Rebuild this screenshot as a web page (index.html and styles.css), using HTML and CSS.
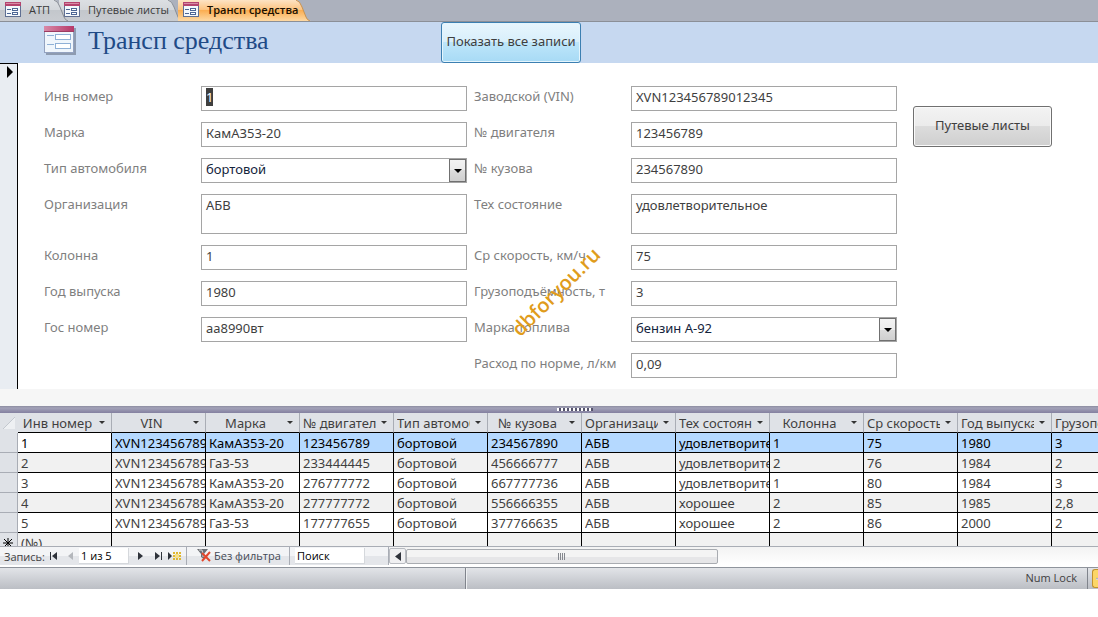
FILE: index.html
```
<!DOCTYPE html>
<html lang="ru">
<head>
    <meta charset="UTF-8">
    <meta name="viewport" content="width=device-width, initial-scale=1.0">
    <title>Трансп средства</title>
    <link rel="stylesheet" href="styles.css">
</head>
<body>
    <!-- shared icons -->
    <svg class="sprite" width="0" height="0">
        <defs>
            <linearGradient id="pink" x1="0" x2="1" y1="0" y2="0">
                <stop offset="0" stop-color="#d98aa8"/>
                <stop offset="1" stop-color="#b5386a"/>
            </linearGradient>
            <linearGradient id="grey-tab" x1="0" x2="0" y1="0" y2="1">
                <stop offset="0" stop-color="#dcdfe3"/>
                <stop offset="0.5" stop-color="#d3d6da"/>
                <stop offset="0.5" stop-color="#c3c7cc"/>
                <stop offset="1" stop-color="#c9ccd1"/>
            </linearGradient>
            <linearGradient id="orange-tab" x1="0" x2="0" y1="0" y2="1">
                <stop offset="0" stop-color="#fde3c4"/>
                <stop offset="0.45" stop-color="#fdc583"/>
                <stop offset="0.5" stop-color="#fbae52"/>
                <stop offset="1" stop-color="#fdd9a4"/>
            </linearGradient>
            <symbol id="form-icon" viewBox="0 0 16 16">
                <rect x="0.5" y="0.5" width="15" height="14" fill="#f4f8fc" stroke="#5f6f92"/>
                <rect x="0" y="0" width="16" height="4" fill="#b5446f"/>
                <rect x="1" y="1" width="14" height="1" fill="#d78aa6"/>
                <path d="M2 7.500h4M2 11.500h4" stroke="#4c6695"/>
                <rect x="7.5" y="6.5" width="5" height="2" fill="#fff" stroke="#4c6695"/>
                <rect x="7.5" y="10.5" width="5" height="2" fill="#fff" stroke="#4c6695"/>
            </symbol>
        </defs>
    </svg>

    <nav class="tabs">
        <a class="tab first" href="#atp">
            <svg class="tab-icon"><use href="#form-icon"/></svg>
            <span>АТП</span>
            <svg class="tab-cap" viewBox="0 0 16 21"><path d="M0 0h3q3 1 5 7l4 10q1 3 4 4H0z" fill="url(#grey-tab)"/><path d="M2 0q4 1 6 7l4 10q1 3 4 4" fill="none" stroke="#8a8e95"/></svg>
        </a>
        <a class="tab second" href="#lists">
            <svg class="tab-icon"><use href="#form-icon"/></svg>
            <span>Путевые листы</span>
            <svg class="tab-cap" viewBox="0 0 16 21"><path d="M0 0h3q3 1 5 7l4 10q1 3 4 4H0z" fill="url(#grey-tab)"/><path d="M2 0q4 1 6 7l4 10q1 3 4 4" fill="none" stroke="#8a8e95"/></svg>
        </a>
        <a class="tab active" href="#vehicles">
            <svg class="tab-icon"><use href="#form-icon"/></svg>
            <span>Трансп средства</span>
            <svg class="tab-cap" viewBox="0 0 16 21"><path d="M0 0h1q4 1 6 7l4 10q1 3 5 4H0z" fill="url(#orange-tab)"/><path d="M1 0q4 1 6 7l4 10q1 3 4 4" fill="none" stroke="#c9924f"/></svg>
        </a>
    </nav>

    <header class="form-header">
        <svg class="title-icon" viewBox="0 0 32 29">
            <rect x="2" y="2" width="30" height="27" fill="#8e9bb0"/>
            <rect x="0.5" y="0.5" width="29" height="26" fill="#f0f6fc" stroke="#93a2c0"/>
            <rect x="0" y="0" width="30" height="5" fill="url(#pink)"/>
            <rect x="0" y="5" width="30" height="1" fill="#9c3c62"/>
            <path d="M3 9.500h7M3 18.500h7" stroke="#8fb0d6"/>
            <rect x="11.5" y="8.5" width="15" height="5" fill="#fff" stroke="#8fb0d6"/>
            <rect x="11.5" y="17.5" width="15" height="5" fill="#fff" stroke="#8fb0d6"/>
        </svg>
        <h1>Трансп средства</h1>
        <button type="button" class="btn btn-blue">Показать все записи</button>
    </header>

    <main class="record">
        <div class="record-selector">
            <svg width="7" height="12" viewBox="0 0 7 12"><path d="M0 0v12l6-6z"/></svg>
        </div>
        <form class="vehicle-form">
            <div class="fields">
                <label for="inv">Инв номер</label>
                <input type="text" id="inv" value="1">
                <label for="vin">Заводской (VIN)</label>
                <input type="text" id="vin" value="XVN123456789012345">

                <label for="brand">Марка</label>
                <input type="text" id="brand" value="КамАЗ53-20">
                <label for="engine">№ двигателя</label>
                <input type="text" id="engine" value="123456789">

                <label for="type">Тип автомобиля</label>
                <div class="combo">
                    <select id="type"><option>бортовой</option></select>
                    <span class="combo-arrow"></span>
                </div>
                <label for="body-no">№ кузова</label>
                <input type="text" id="body-no" value="234567890">

                <label for="org">Организация</label>
                <textarea id="org">АБВ</textarea>
                <label for="state">Тех состояние</label>
                <textarea id="state">удовлетворительное</textarea>

                <label for="column">Колонна</label>
                <input type="text" id="column" value="1">
                <label for="speed">Ср скорость, км/ч</label>
                <input type="text" id="speed" value="75">

                <label for="year">Год выпуска</label>
                <input type="text" id="year" value="1980">
                <label for="capacity">Грузоподъёмность, т</label>
                <input type="text" id="capacity" value="3">

                <label for="plate">Гос номер</label>
                <input type="text" id="plate" value="аа8990вт">
                <label for="fuel">Марка топлива</label>
                <div class="combo">
                    <select id="fuel"><option>бензин А-92</option></select>
                    <span class="combo-arrow"></span>
                </div>

                <label for="rate" class="right-col">Расход по норме, л/км</label>
                <input type="text" id="rate" value="0,09">
            </div>
            <button type="button" class="btn btn-grey">Путевые листы</button>
            <span class="watermark">dbforyou.ru</span>
        </form>
    </main>

    <div class="splitter"><span class="grip"></span></div>

    <div class="sheet">
        <table>
            <colgroup>
                <col class="col-sel">
                <col span="12">
            </colgroup>
            <thead>
                <tr>
                    <th class="corner"><svg width="12" height="12" viewBox="0 0 12 12"><path d="M12 0v12H0z" fill="#eef0f3"/><path d="M0 12L12 0" stroke="#c3c8cf"/></svg></th>
                    <th><div class="head"><span>Инв номер</span><i></i></div></th>
                    <th><div class="head"><span>VIN</span><i></i></div></th>
                    <th><div class="head"><span>Марка</span><i></i></div></th>
                    <th><div class="head"><span>№ двигателя</span><i></i></div></th>
                    <th><div class="head"><span>Тип автомобиля</span><i></i></div></th>
                    <th><div class="head"><span>№ кузова</span><i></i></div></th>
                    <th><div class="head"><span>Организация</span><i></i></div></th>
                    <th><div class="head"><span>Тех состояние</span><i></i></div></th>
                    <th><div class="head"><span>Колонна</span><i></i></div></th>
                    <th><div class="head"><span>Ср скорость</span><i></i></div></th>
                    <th><div class="head"><span>Год выпуска</span><i></i></div></th>
                    <th><div class="head"><span>Грузоподъёмность</span><i></i></div></th>
                </tr>
            </thead>
            <tbody>
                <tr class="current"><td class="sel"></td><td>1</td><td>XVN123456789012345</td><td>КамАЗ53-20</td><td>123456789</td><td>бортовой</td><td>234567890</td><td>АБВ</td><td>удовлетворительное</td><td>1</td><td>75</td><td>1980</td><td>3</td></tr>
                <tr><td class="sel"></td><td>2</td><td>XVN123456789012345</td><td>ГаЗ-53</td><td>233444445</td><td>бортовой</td><td>456666777</td><td>АБВ</td><td>удовлетворительное</td><td>2</td><td>76</td><td>1984</td><td>2</td></tr>
                <tr><td class="sel"></td><td>3</td><td>XVN123456789012345</td><td>КамАЗ53-20</td><td>276777772</td><td>бортовой</td><td>667777736</td><td>АБВ</td><td>удовлетворительное</td><td>1</td><td>80</td><td>1984</td><td>3</td></tr>
                <tr><td class="sel"></td><td>4</td><td>XVN123456789012345</td><td>КамАЗ53-20</td><td>277777772</td><td>бортовой</td><td>556666355</td><td>АБВ</td><td>хорошее</td><td>2</td><td>85</td><td>1985</td><td>2,8</td></tr>
                <tr><td class="sel"></td><td>5</td><td>XVN123456789012345</td><td>ГаЗ-53</td><td>177777655</td><td>бортовой</td><td>377766635</td><td>АБВ</td><td>хорошее</td><td>2</td><td>86</td><td>2000</td><td>2</td></tr>
                <tr><td class="sel"><svg width="10" height="10" viewBox="0 0 10 10"><path d="M5 0v10M0 5h10M1 1l8 8M9 1l-8 8" stroke="#000"/></svg></td><td>(№)</td><td></td><td></td><td></td><td></td><td></td><td></td><td></td><td></td><td></td><td></td><td></td></tr>
            </tbody>
        </table>
    </div>

    <div class="navigator">
        <div class="nav-group records">
            <label for="rec-no">Запись:</label>
            <button type="button" aria-label="Первая запись"><svg width="8" height="8" viewBox="0 0 8 8"><path d="M0 0h1v8H0zM7 0v8L2 4z"/></svg></button>
            <button type="button" aria-label="Предыдущая запись" disabled><svg width="5" height="8" viewBox="0 0 5 8"><path d="M5 0v8L0 4z"/></svg></button>
            <input type="text" id="rec-no" value="1 из 5">
            <button type="button" aria-label="Следующая запись"><svg width="5" height="8" viewBox="0 0 5 8"><path d="M0 0v8l5-4z"/></svg></button>
            <button type="button" aria-label="Последняя запись"><svg width="8" height="8" viewBox="0 0 8 8"><path d="M7 0h1v8H7zM1 0v8l5-4z"/></svg></button>
            <button type="button" aria-label="Новая запись"><svg width="13" height="8" viewBox="0 0 13 8"><path d="M0 0v8l4-4z"/><path d="M5 0h2v2H5zM8 0h2v2H8zM11 0h2v2h-2zM5 3h2v2H5zM11 3h2v2h-2zM5 6h2v2H5zM8 6h2v2H8zM11 6h2v2h-2z" fill="#e0b832"/><rect x="7" y="2" width="4" height="4" fill="#f6e08a"/></svg></button>
        </div>
        <button type="button" class="nav-group filter">
            <svg width="15" height="13" viewBox="0 0 15 13"><path d="M0 0h11L7 5v5l-3-2V5z" fill="#6d7075"/><path d="M2 1h3l1 4v3" fill="none" stroke="#d5d8dc"/><path d="M5 4l8 8M13 3l-8 9" stroke="#e2472c" stroke-width="2"/></svg>
            <span>Без фильтра</span>
        </button>
        <div class="nav-group search">
            <input type="text" aria-label="Поиск" value="Поиск">
        </div>
        <div class="scrollbar">
            <button type="button" aria-label="Влево"><svg width="6" height="9" viewBox="0 0 6 9"><path d="M6 0v9L0 4.500z"/></svg></button>
            <div class="thumb"><span></span></div>
        </div>
    </div>

    <footer class="status">
        <div class="status-left"></div>
        <div class="status-right"><span>Num Lock</span></div>
        <button type="button" class="view-btn" aria-label="Режим формы"><svg width="12" height="12" viewBox="0 0 12 12"><rect x="0.5" y="0.5" width="11" height="10" fill="#fff" stroke="#54688d"/><path d="M1 2h10" stroke="#54688d" stroke-width="2"/></svg></button>
    </footer>

    <script>
        // the cursor starts in the first field with its value selected
        const inv = document.getElementById('inv');
        inv.focus();
        inv.select();
    </script>
</body>
</html>
```
FILE: styles.css
```
* {
    margin: 0;
    padding: 0;
    box-sizing: border-box;
}

body {
    font-family: "Noto Sans", "Open Sans", sans-serif;
    font-size: 13px;
    color: #3f3f3f;
    background: #fff;
    overflow: hidden;
}

input, select, textarea, button {
    font: inherit;
    color: inherit;
}

.sprite {
    position: absolute;
}

/* tabs */
.tabs {
    display: flex;
    height: 22px;
    background: #acb1bd;
    border-bottom: 1px solid #8b8f97;
    font-family: "Open Sans", sans-serif;
    font-size: 11px;
}

.tab {
    position: relative;
    display: flex;
    align-items: center;
    gap: 8px;
    height: 21px;
    padding-left: 5px;
    padding-bottom: 2px;
    color: #3a3a3a;
    text-decoration: none;
    background: linear-gradient(#dcdfe3, #d3d6da 50%, #c3c7cc 50%, #c9ccd1);
}

.tab.first {
    width: 52px;
    z-index: 2;
}

.tab.second {
    width: 107px;
    margin-left: 7px;
    margin-right: 12px;
    z-index: 1;
}

.tab.active {
    z-index: 3;
    width: 117px;
    color: #1a1000;
    font-weight: 600;
    background: linear-gradient(#fde3c4, #fdc583 45%, #fbae52 50%, #fdd9a4);
}

.tab span {
    position: relative;
    z-index: 1;
    white-space: nowrap;
}

.tab-icon {
    flex: none;
    width: 16px;
    height: 16px;
}

.tab-cap {
    position: absolute;
    left: 100%;
    top: 0;
    width: 16px;
    height: 21px;
}

/* header */
.form-header {
    display: flex;
    align-items: flex-start;
    height: 41px;
    padding-left: 44px;
    background: #c6d8f0;
}

.title-icon {
    flex: none;
    width: 32px;
    height: 29px;
    margin-top: 4px;
}

.form-header h1 {
    width: 365px;
    padding-left: 12px;
    font-family: "Liberation Serif", serif;
    font-size: 26px;
    font-weight: normal;
    line-height: 38px;
    color: #1f4a86;
}

.btn {
    height: 41px;
    padding-bottom: 3px;
    border-radius: 3px;
    font-size: 13px;
    white-space: nowrap;
}

.btn-blue {
    width: 140px;
    border: 1px solid #3c7fb1;
    background: linear-gradient(#e8f6fd, #d8effb 48%, #bee6fa 50%, #a7daf5);
    box-shadow: inset 0 0 0 1px #e4f5fd;
}

.btn-grey {
    width: 139px;
    margin-top: 20px;
    border: 1px solid #707070;
    background: linear-gradient(#f3f3f3, #ebebeb 48%, #dcdcdc 50%, #cfcfcf);
    box-shadow: inset 0 0 0 1px #fafafa;
}

/* record form */
.record {
    display: flex;
    height: 326px;
}

.record-selector {
    width: 18px;
    padding: 2px 0 0 7px;
    line-height: 0;
    background: #e9edf2;
    border-top: 1px solid #000;
    border-right: 1px solid #000;
}

.vehicle-form {
    position: relative;
    display: flex;
    align-items: flex-start;
    gap: 16px;
    padding: 23px 0 0 26px;
}

.fields {
    display: grid;
    grid-template-columns: 150px 266px 150px 266px;
    column-gap: 7px;
    row-gap: 11px;
}

.fields label {
    line-height: 20px;
    color: #7f7f7f;
    white-space: nowrap;
}

.fields .right-col {
    grid-column: 3;
}

.fields input,
.fields select,
.fields textarea {
    display: block;
    width: 100%;
    height: 25px;
    padding: 0 4px 3px;
    border: 1px solid #a5a5a5;
    border-radius: 0;
    background: #fff;
    outline: none;
}

.fields textarea {
    height: 40px;
    line-height: 20px;
    resize: none;
    overflow: hidden;
}

.fields select {
    appearance: none;
    color: #14243c;
}

.fields input::selection {
    color: #fff;
    background: #3f3f3f;
}

.combo {
    position: relative;
}

.combo-arrow {
    position: absolute;
    top: 1px;
    right: 1px;
    display: flex;
    align-items: center;
    justify-content: center;
    width: 17px;
    height: 23px;
    border: 1px solid #707070;
    background: linear-gradient(#f3f3f3, #ebebeb 50%, #dcdcdc 50%, #cfcfcf);
    pointer-events: none;
}

.combo-arrow::after {
    content: "";
    border: 4px solid transparent;
    border-top-color: #000;
    border-bottom: none;
}

.watermark {
    position: absolute;
    top: 215px;
    left: 480px;
    font-family: "Open Sans", sans-serif;
    font-size: 20px;
    font-weight: 600;
    color: #e09c1c;
    transform: rotate(-45deg);
    pointer-events: none;
}

/* splitter between the form and the datasheet */
.splitter {
    display: flex;
    justify-content: center;
    height: 24px;
    padding-top: 19px;
    padding-left: 52px;
    background: linear-gradient(#f6f6f6 17px, #8c8ca0 17px, #a3a2b8 19px, #8380a0);
}

.grip {
    width: 36px;
    height: 3px;
    background: repeating-linear-gradient(90deg, #fff 0 2px, #55536c 2px 4px);
}

/* datasheet */
.sheet {
    height: 133px;
    overflow: hidden;
}

.sheet table {
    width: 1146px;
    table-layout: fixed;
    border-collapse: separate;
    border-spacing: 0;
}

.col-sel {
    width: 18px;
}

.sheet th,
.sheet td {
    height: 20px;
    padding: 1px 0 0 3px;
    border-right: 1px solid #000;
    border-bottom: 1px solid #000;
    line-height: 18px;
    text-align: left;
    white-space: nowrap;
    overflow: clip;
    overflow-clip-margin: content-box;
}

.sheet th {
    padding-top: 0;
    font-weight: normal;
    background: #dfe2e7;
    border-right-color: #a9adb5;
}

.sheet th.corner {
    border-color: #dfe2e7;
    line-height: 0;
}

.head {
    display: flex;
    align-items: center;
}

.head span {
    flex: 1;
    overflow: hidden;
    text-align: center;
}

.head i {
    margin: 0 6px 0 5px;
    border: 3px solid transparent;
    border-top-color: #333;
    border-bottom: none;
}

.sheet tr:nth-child(even) td {
    background: #f1f1f1;
}

.sheet tr.current td {
    color: #000;
    background: #b5d9ff;
}

.sheet tr.current td:nth-child(2) {
    background: #fff;
}

.sheet tbody td.sel,
.sheet tbody tr.current td.sel,
.sheet tbody tr:nth-child(even) td.sel {
    background: #dfe2e7;
    border-color: #a9adb5;
}

/* record navigator */
.navigator {
    display: flex;
    height: 21px;
    border-top: 1px solid #a9adb5;
    background: linear-gradient(#f3f3f3, #fff 18px);
    font-family: "Open Sans", sans-serif;
    font-size: 11px;
}

.nav-group {
    display: flex;
    align-items: center;
    height: 18px;
    border: none;
    border-right: 1px solid #a9adb5;
    background: linear-gradient(#f3f4f6 50%, #e4e6ea 50%);
}

.navigator button {
    color: #444a55;
}

.navigator svg {
    display: block;
    fill: #2f333b;
}

.records {
    width: 187px;
    padding-left: 4px;
}

.records label {
    width: 41px;
}

.records button {
    display: flex;
    justify-content: center;
    width: 17px;
    border: none;
    background: none;
}

.records button:disabled svg {
    fill: #b4b7bc;
}

.navigator input {
    height: 16px;
    padding-left: 2px;
    padding-bottom: 1px;
    border: 1px solid #d5d8dc;
    border-top: none;
    border-left: none;
    background: #fff;
    color: #000;
}

.records input {
    width: 50px;
    margin-right: 3px;
}

.navigator .filter {
    width: 103px;
    padding-left: 10px;
    padding-bottom: 1px;
    gap: 2px;
    white-space: nowrap;
}

.search {
    width: 99px;
    padding-left: 5px;
}

.search input {
    width: 70px;
}

.scrollbar {
    flex: 1;
    display: flex;
    align-items: center;
    height: 18px;
}

.scrollbar button {
    display: flex;
    align-items: center;
    justify-content: center;
    width: 17px;
    height: 16px;
    border: 1px solid #b9bcc2;
    border-radius: 2px;
    background: #f0f0f2;
}

.thumb {
    display: flex;
    align-items: center;
    justify-content: center;
    width: 44%;
    height: 15px;
    border: 1px solid #a9acb1;
    border-radius: 2px;
    background: linear-gradient(#f4f4f4 50%, #e6e6e8 50%);
}

.thumb span {
    width: 8px;
    height: 7px;
    background: repeating-linear-gradient(90deg, #85888e 0 1px, transparent 1px 2px);
}

/* status bar */
.status {
    display: flex;
    height: 22px;
    border-top: 1px solid #8f949c;
    background: linear-gradient(#e2e4e8, #bbbec4);
    font-family: "Open Sans", sans-serif;
    font-size: 11px;
    line-height: 20px;
}

.status-left {
    width: 466px;
    border-right: 1px solid #80848c;
}

.status-right {
    flex: 1;
    padding-right: 10px;
    border-left: 1px solid #eef0f2;
    border-right: 1px solid #80848c;
    text-align: right;
}

.view-btn {
    display: flex;
    align-items: center;
    flex: none;
    width: 6px;
    height: 19px;
    margin: 1px 0 0 4px;
    padding-left: 3px;
    border: 1px solid #c2922e;
    border-right: none;
    border-radius: 3px 0 0 3px;
    background: #fcd667;
    overflow: hidden;
}
```
